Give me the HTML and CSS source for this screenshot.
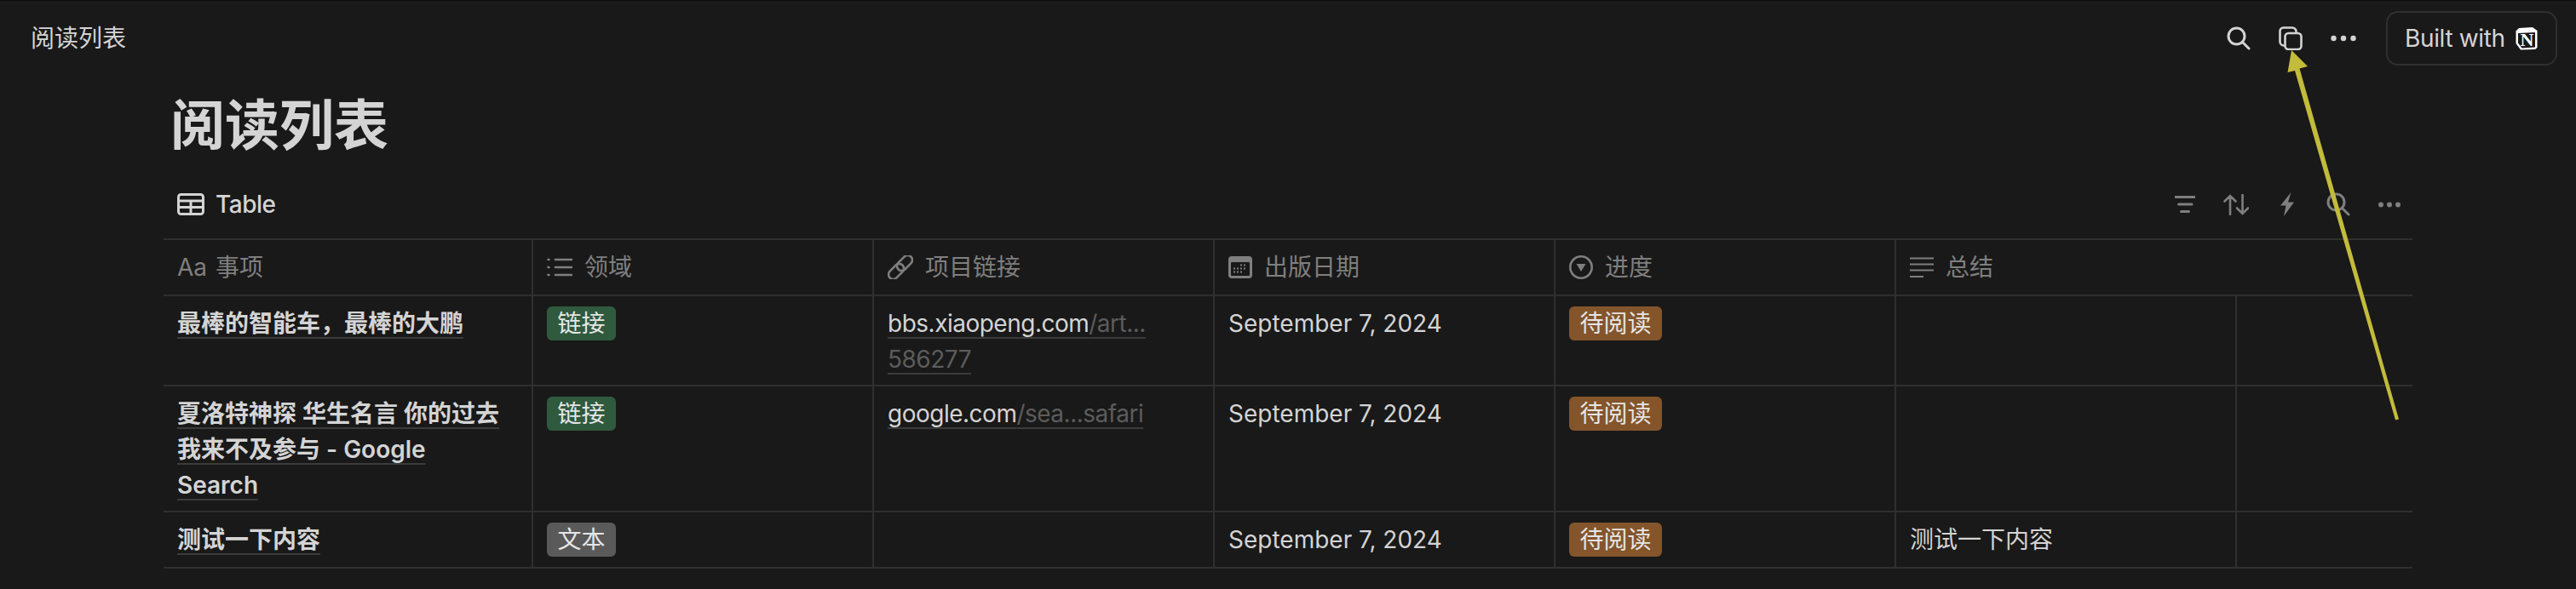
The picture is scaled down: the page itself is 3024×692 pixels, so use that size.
FILE: index.html
```html
<!DOCTYPE html>
<html lang="zh-CN">
<head>
    <meta charset="UTF-8">
    <title>阅读列表</title>
    <link rel="stylesheet" href="styles.css">
</head>
<body>
    <header class="topbar">
        <span class="crumb">阅读列表</span>
        <div class="top_actions">
            <svg class="icon_light" width="28" height="28" viewBox="0 0 28 28"><circle cx="11.5" cy="11.5" r="9.5"/><path d="M18.5 18.5L26 26"/></svg>
            <svg class="icon_light thin" width="28" height="28" viewBox="0 0 28 28"><rect x="7.5" y="8" width="19" height="19" rx="4"/><path d="M6 22.5A4.5 4.5 0 0 1 1.5 18V5.5A4 4 0 0 1 5.5 1.5H16A4.5 4.5 0 0 1 20.5 6"/></svg>
            <svg class="fill_light" width="30" height="8" viewBox="0 0 30 8"><circle cx="3.5" cy="4" r="3.2"/><circle cx="15" cy="4" r="3.2"/><circle cx="26.5" cy="4" r="3.2"/></svg>
            <div class="built">
                <span class="built_text">Built with</span>
                <svg width="28" height="28" viewBox="0 0 28 28">
                    <path d="M1.5 5.5L5 2L21 1L26.5 5V25L24 27L7 27.5L1.5 20Z" fill="#fff"/>
                    <path d="M4 8L24 7V24.5L8.5 25.5L4 19.5Z" fill="#191919"/>
                    <text x="14.5" y="22.5" class="logo_n">N</text>
                </svg>
            </div>
        </div>
    </header>

    <main class="page">
        <h1 class="title">阅读列表</h1>

        <div class="toolbar">
            <div class="view_tab">
                <svg class="icon_light" width="32" height="26" viewBox="0 0 32 26"><rect x="1.5" y="1.5" width="29" height="23" rx="3"/><path d="M1.5 9H30.5M1.5 16.5H30.5M16 9V24.5"/></svg>
                <span>Table</span>
            </div>
            <div class="tools">
                <span class="tool"><svg class="icon_gray" width="24" height="20" viewBox="0 0 24 20"><path d="M1 1.5H23M4.5 10H20M7.5 18.5H16.5"/></svg></span>
                <span class="tool"><svg class="icon_gray thin" width="30" height="25" viewBox="0 0 30 25"><path d="M8 24V2M1.5 8.5L8 2L14.5 8.5M22.5 1V23M16 16.5L22.5 23L29 16.5"/></svg></span>
                <span class="tool"><svg class="fill_gray" width="16" height="28" viewBox="0 0 16 28"><path d="M12.5 0L0 15.5H6.5L4 28L16 11.5H9Z"/></svg></span>
                <span class="tool"><svg class="icon_gray" width="28" height="28" viewBox="0 0 28 28"><circle cx="11.5" cy="11.5" r="9.5"/><path d="M18.5 18.5L26 26"/></svg></span>
                <span class="tool"><svg class="fill_gray" width="26" height="7" viewBox="0 0 26 7"><circle cx="3" cy="3.5" r="3"/><circle cx="13" cy="3.5" r="3"/><circle cx="23" cy="3.5" r="3"/></svg></span>
            </div>
        </div>

        <table class="db_table">
            <colgroup>
                <col class="col_name">
                <col class="col_std">
                <col class="col_std">
                <col class="col_std">
                <col class="col_std">
                <col class="col_std">
                <col class="col_last">
            </colgroup>
            <thead>
                <tr>
                    <th><div class="head"><span class="aa">Aa</span>事项</div></th>
                    <th><div class="head">
                        <svg class="icon_gray thin" width="30" height="28" viewBox="0 0 30 28"><path d="M10 5H29M10 14H29M10 23H29M1.5 5H2.5M1.5 14H2.5M1.5 23H2.5"/></svg>领域</div></th>
                    <th><div class="head">
                        <svg class="icon_gray thin" width="30" height="28" viewBox="0 0 30 28"><g transform="rotate(45 15 14)"><rect x="9.5" y="-3.5" width="11" height="21" rx="5.5"/><rect x="9.5" y="10.5" width="11" height="21" rx="5.5"/></g></svg>项目链接</div></th>
                    <th><div class="head">
                        <svg width="28" height="28" viewBox="0 0 28 28"><rect y="1" width="28" height="26" rx="4" fill="#7f7f7f"/><rect x="3" y="8" width="22" height="16" rx="1" fill="#191919"/><path d="M14 11.5H22M6 15.5H22M6 19.5H18" stroke="#7f7f7f" stroke-width="2" stroke-dasharray="2 2"/></svg>出版日期</div></th>
                    <th><div class="head">
                        <svg class="icon_gray thin" width="28" height="28" viewBox="0 0 28 28"><circle cx="14" cy="14" r="12.7"/><path d="M8.5 10H19.5L14 19Z" fill="#7f7f7f" stroke="none"/></svg>进度</div></th>
                    <th colspan="2"><div class="head">
                        <svg class="icon_gray lines" width="28" height="28" viewBox="0 0 28 28"><path d="M0 3.5H28M0 10.5H28M0 17.5H28M0 25H16"/></svg>总结</div></th>
                </tr>
            </thead>
            <tbody>
                <tr>
                    <td class="name"><span class="ul">最棒的智能车，最棒的大鹏</span></td>
                    <td><span class="tag green">链接</span></td>
                    <td class="link"><span class="ul">bbs.xiaopeng.com<span class="dim">/art...<br>586277</span></span></td>
                    <td>September 7, 2024</td>
                    <td><span class="tag brown">待阅读</span></td>
                    <td></td>
                    <td></td>
                </tr>
                <tr>
                    <td class="name"><span class="ul">夏洛特神探 华生名言 你的过去我来不及参与 - Google Search</span></td>
                    <td><span class="tag green">链接</span></td>
                    <td class="link"><span class="ul">google.com<span class="dim">/sea...safari</span></span></td>
                    <td>September 7, 2024</td>
                    <td><span class="tag brown">待阅读</span></td>
                    <td></td>
                    <td></td>
                </tr>
                <tr>
                    <td class="name"><span class="ul">测试一下内容</span></td>
                    <td><span class="tag gray">文本</span></td>
                    <td></td>
                    <td>September 7, 2024</td>
                    <td><span class="tag brown">待阅读</span></td>
                    <td>测试一下内容</td>
                    <td></td>
                </tr>
            </tbody>
        </table>
    </main>

    <!-- annotation arrow drawn over the screenshot -->
    <svg class="arrow" width="3024" height="692" viewBox="0 0 3024 692">
        <path d="M2690 59L2709 78L2699.5 80.5L2816 492.5L2812 493.5L2694 83L2685.5 85Z" fill="#c3bb3b"/>
    </svg>
</body>
</html>
```

FILE: styles.css
```css
*{margin:0; padding:0; box-sizing: border-box;}
html,body{height:100%; overflow:hidden;}
body{
    position: relative;
    background-color: #191919;
    color: #d4d4d4;
    font-family: Inter, "Noto Sans CJK SC", sans-serif;
    font-size: 28px;
    line-height: 42px;
}

svg{display:block; flex: none;}
.icon_light,.icon_gray{fill:none; stroke-width:3; stroke-linecap:round;}
.icon_light{stroke:#d4d4d4;}
.icon_gray{stroke:#7f7f7f;}
.thin{stroke-width:2.6;}
.lines{stroke-width:2.2; stroke-linecap:butt;}
.fill_light{fill:#d4d4d4;}
.fill_gray{fill:#7f7f7f;}

.topbar{
    display:flex;
    justify-content: space-between;
    align-items: center;
    height:88px;
    padding:0 22px 0 36px;
    border-top:1px solid #0b0b0b;
}
.top_actions{
    display:flex;
    align-items: center;
    gap:33px;
}
.built{
    display:flex;
    justify-content: space-between;
    align-items: center;
    width:201px;
    height:64px;
    margin-left:2px;
    padding:0 20px;
    border:2px solid #2f2f2f;
    border-radius:14px;
}
.built_text{letter-spacing:-0.35px;}
.logo_n{
    font-family: "Liberation Serif", serif;
    font-size:22px;
    font-weight:700;
    fill:#fff;
    text-anchor: middle;
}

.page{
    width:2640px;
    margin-left:192px;
}
.title{
    padding:21px 0 0 8px;
    font-size:64px;
    line-height:76px;
    font-weight:700;
}
.toolbar{
    display:flex;
    justify-content: space-between;
    align-items: center;
    height:56px;
    margin:27px 0 12px;
    padding:0 11px 0 16px;
}
.view_tab{
    display:flex;
    align-items: center;
    gap:13px;
    font-weight:500;
    letter-spacing:-0.5px;
}
.tools{
    display:flex;
    align-items: center;
    gap:28px;
}
.tool{
    display:flex;
    justify-content: center;
    width:32px;
}

.db_table{
    width:2640px;
    table-layout: fixed;
    border-collapse: separate;
    border-spacing:0;
    border-top:2px solid #2f2f2f;
}
.col_name{width:434px;}
.col_std{width:400px;}
.col_last{width:206px;}
th,td{
    height:66px;
    padding:11px 16px 9px;
    vertical-align: top;
    text-align: left;
    font-weight:400;
    border-bottom:2px solid #2f2f2f;
    border-right:2px solid #2f2f2f;
}
th:last-child,td:last-child{border-right:none;}
th{
    padding:0 16px;
    vertical-align: middle;
    color:#7f7f7f;
}
.head{
    display:flex;
    align-items: center;
    gap:14px;
}
.aa{width:31px;}
td.name{
    padding-right:28px;
    font-weight:600;
}
td.link{letter-spacing:-0.5px;}
.ul{
    text-decoration: underline;
    text-decoration-color: #3b3b3b;
    text-decoration-thickness: 2px;
    text-underline-offset: 6px;
    text-decoration-skip-ink: none;
}
.dim{color:#5c5c5c;}
.tag{
    display:inline-block;
    height:40px;
    margin-top:1px;
    padding:0 12.5px;
    border-radius:6px;
    line-height:40px;
    vertical-align: top;
    color:#e6e6e6;
}
.green{background-color:#2f5a3e;}
.brown{background-color:#84552b;}
.gray{background-color:#5a5a5a;}

.arrow{
    position: absolute;
    left:0;
    top:0;
    pointer-events: none;
}
```
